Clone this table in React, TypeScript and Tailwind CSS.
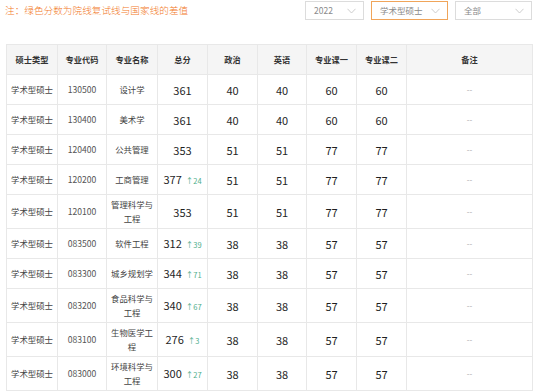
import React from 'react';

type Row = {
  type: string;
  code: string;
  name: string;
  total: number;
  diff?: number;
  politics: number;
  english: number;
  major1: number;
  major2: number;
};

const rows: Row[] = [
  { type: '学术型硕士', code: '130500', name: '设计学', total: 361, politics: 40, english: 40, major1: 60, major2: 60 },
  { type: '学术型硕士', code: '130400', name: '美术学', total: 361, politics: 40, english: 40, major1: 60, major2: 60 },
  { type: '学术型硕士', code: '120400', name: '公共管理', total: 353, politics: 51, english: 51, major1: 77, major2: 77 },
  { type: '学术型硕士', code: '120200', name: '工商管理', total: 377, diff: 24, politics: 51, english: 51, major1: 77, major2: 77 },
  { type: '学术型硕士', code: '120100', name: '管理科学与工程', total: 353, politics: 51, english: 51, major1: 77, major2: 77 },
  { type: '学术型硕士', code: '083500', name: '软件工程', total: 312, diff: 39, politics: 38, english: 38, major1: 57, major2: 57 },
  { type: '学术型硕士', code: '083300', name: '城乡规划学', total: 344, diff: 71, politics: 38, english: 38, major1: 57, major2: 57 },
  { type: '学术型硕士', code: '083200', name: '食品科学与工程', total: 340, diff: 67, politics: 38, english: 38, major1: 57, major2: 57 },
  { type: '学术型硕士', code: '083100', name: '生物医学工程', total: 276, diff: 3, politics: 38, english: 38, major1: 57, major2: 57 },
  { type: '学术型硕士', code: '083000', name: '环境科学与工程', total: 300, diff: 27, politics: 38, english: 38, major1: 57, major2: 57 },
];

const headers = ['硕士类型', '专业代码', '专业名称', '总分', '政治', '英语', '专业课一', '专业课二', '备注'];
const widths = ['w-[51px]', 'w-[49px]', 'w-[51px]', 'w-[50px]', 'w-[50px]', 'w-[49px]', 'w-[50px]', 'w-[50px]', 'w-[126px]'];

const Chevron: React.FC = () => (
  <svg width="9" height="6" viewBox="0 0 9 6" fill="none" className="shrink-0">
    <path d="M0.5 0.8 L4.5 5 L8.5 0.8" stroke="#c8c8c8" strokeWidth="0.9" />
  </svg>
);

const Select: React.FC<{ label: string; width: string; active?: boolean }> = ({ label, width, active }) => (
  <div
    className={`${width} h-[19px] flex items-center justify-between pl-[8px] pr-[7px] border bg-white ${
      active ? 'border-[#f0a55a]' : 'border-[#dcdcdc]'
    }`}
  >
    <span className="text-[8.5px] text-[#8a8a8a]">{label}</span>
    <Chevron />
  </div>
);

const Score: React.FC<{ value: number }> = ({ value }) => (
  <span className="text-[11px] text-[#1f1f1f]">{value}</span>
);

const App: React.FC = () => {
  const cell = 'border border-[#e8e8e8] text-center align-middle h-[30px] py-[3px] px-[3px] leading-[13.5px]';
  return (
    <div className="w-[540px] h-[392px] bg-white overflow-hidden font-['Noto_Sans_CJK_SC','Noto_Sans',sans-serif]">
      <div className="flex items-center justify-between pl-[5px] pr-[8px] pt-[1px]">
        <div className="text-[9.6px] text-[#f2781e] font-light tracking-[0.05px]">注：绿色分数为院线复试线与国家线的差值</div>
        <div className="flex gap-[7px]">
          <Select label="2022" width="w-[59px]" />
          <Select label="学术型硕士" width="w-[77px]" active />
          <Select label="全部" width="w-[77px]" />
        </div>
      </div>
      <div className="pl-[6px] pt-[24px]">
        <table className="table-fixed border-collapse w-[526px]">
          <colgroup>
            {widths.map((w, i) => (
              <col key={i} className={w} />
            ))}
          </colgroup>
          <thead>
            <tr className="bg-[#f5f5f5]">
              {headers.map((h) => (
                <th key={h} className={`${cell} text-[8.2px] font-bold text-[#333]`}>
                  {h}
                </th>
              ))}
            </tr>
          </thead>
          <tbody>
            {rows.map((r) => (
              <tr key={r.code}>
                <td className={`${cell} text-[8.4px] text-[#444]`}>{r.type}</td>
                <td className={`${cell} text-[8.6px] text-[#555]`}>{r.code}</td>
                <td className={`${cell} text-[8.4px] text-[#444]`}>{r.name}</td>
                <td className={`${cell} whitespace-nowrap`}>
                  <Score value={r.total} />
                  {r.diff !== undefined && (
                    <span className="ml-[4px] text-[7.5px] text-[#4fae8c]">↑{r.diff}</span>
                  )}
                </td>
                <td className={cell}>
                  <Score value={r.politics} />
                </td>
                <td className={cell}>
                  <Score value={r.english} />
                </td>
                <td className={cell}>
                  <Score value={r.major1} />
                </td>
                <td className={cell}>
                  <Score value={r.major2} />
                </td>
                <td className={`${cell} text-[8px] text-[#aaa]`}>--</td>
              </tr>
            ))}
          </tbody>
        </table>
      </div>
    </div>
  );
};

export default App;
